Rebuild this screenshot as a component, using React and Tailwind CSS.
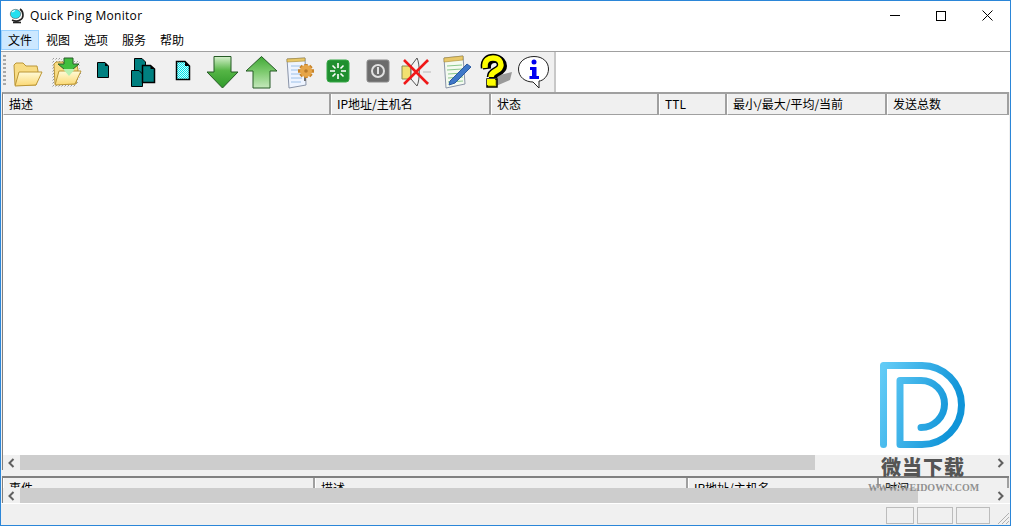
import React from "react";

const cjk = { fontFamily: '"Noto Sans CJK SC", "Noto Sans", sans-serif' };

const menus = ["文件", "视图", "选项", "服务", "帮助"];

const topColumns = [
  { label: "描述", width: "w-[328px]" },
  { label: "IP地址/主机名", width: "w-[160px]" },
  { label: "状态", width: "w-[168px]" },
  { label: "TTL", width: "w-[68px]" },
  { label: "最小/最大/平均/当前", width: "w-[160px]" },
  { label: "发送总数", width: "flex-1" },
];

const bottomColumns = [
  { label: "事件", width: "w-[312px]" },
  { label: "描述", width: "w-[373px]" },
  { label: "IP地址/主机名", width: "w-[191px]" },
  { label: "时间", width: "flex-1" },
];

function Svg({ children }) {
  return (
    <svg width="39" height="40" viewBox="0 0 39 40" className="block">
      {children}
    </svg>
  );
}

function FolderIcon() {
  return (
    <Svg>
      <defs>
        <linearGradient id="fold" x1="0" y1="0" x2="0" y2="1">
          <stop offset="0" stopColor="#fffbd8" />
          <stop offset="1" stopColor="#fbd873" />
        </linearGradient>
      </defs>
      <path d="M7 33 L6 13 L8 11 H15 L18 14 H29 L30 19 L28 33 Z" fill="#f8dc84" stroke="#bb9636" />
      <path d="M7 34 L11 20 H34 L28 33 Z" fill="url(#fold)" stroke="#bb9636" />
    </Svg>
  );
}

function OpenIcon() {
  return (
    <Svg>
      <defs>
        <pattern id="halo" width="3" height="3" patternUnits="userSpaceOnUse">
          <rect width="1" height="1" fill="#9a9a9a" />
          <rect x="2" y="1" width="1" height="1" fill="#c4c4c4" />
        </pattern>
        <linearGradient id="fold2" x1="0" y1="0" x2="0" y2="1">
          <stop offset="0" stopColor="#fffbd8" />
          <stop offset="1" stopColor="#fbd873" />
        </linearGradient>
      </defs>
      <path d="M5 5 H15 V9 H33 V20 L35 20 L29 35 H5 Z" fill="url(#halo)" />
      <path d="M8 32 L7 12 L9 10 H16 L19 13 H30 L31 18 L29 32 Z" fill="#f8dc84" stroke="#bb9636" />
      <path d="M8 33 L12 19 H34 L28 32 Z" fill="url(#fold2)" stroke="#bb9636" />
      <path d="M17 6 H26 V12 H32 L21.5 21 L11 12 H17 Z" fill="#3fbf3f" stroke="#2a5a2a" />
      <path d="M16 17 L22 24 L28 17 Z" fill="#b8f0b0" />
    </Svg>
  );
}

function DocIcon() {
  return (
    <Svg>
      <path d="M11.5 10.5 H19 L22.5 14 V25.5 H11.5 Z" fill="#008080" stroke="#000" />
      <path d="M19 10.5 V14 H22.5 Z" fill="#000" />
    </Svg>
  );
}

function DocsIcon() {
  const page = "M0.5 0.5 H8 L11.5 4 V16.5 H0.5 Z";
  return (
    <Svg>
      <path transform="translate(9 6)" d={page} fill="#008080" stroke="#000" />
      <path transform="translate(6 18)" d={page} fill="#008080" stroke="#000" />
      <path transform="translate(17 13)" d="M0.5 0.5 H8.5 L12.5 4 V17.5 H0.5 Z" fill="#008080" stroke="#000" strokeWidth="1.5" />
      <path d="M25.5 13.5 V17 H29.5 Z" fill="#000" />
    </Svg>
  );
}

function DocNewIcon() {
  return (
    <Svg>
      <defs>
        <pattern id="dither" width="2" height="2" patternUnits="userSpaceOnUse">
          <rect width="2" height="2" fill="#c8ffff" />
          <rect width="1" height="1" fill="#00e0e8" />
          <rect x="1" y="1" width="1" height="1" fill="#00e0e8" />
        </pattern>
      </defs>
      <path d="M12.5 9.5 H21 L25.5 14 V27.5 H12.5 Z" fill="url(#dither)" stroke="#000" strokeWidth="1.5" />
      <path d="M21 9.5 V14 H25.5 Z" fill="#000" />
    </Svg>
  );
}

function DownIcon() {
  return (
    <Svg>
      <defs>
        <linearGradient id="dn" x1="0" y1="0" x2="0" y2="1">
          <stop offset="0" stopColor="#d5f0cc" />
          <stop offset="0.45" stopColor="#55b545" />
          <stop offset="1" stopColor="#2f9a2a" />
        </linearGradient>
      </defs>
      <path d="M11 4.5 H28 V20 H35 L19.5 36 L4 20 H11 Z" fill="url(#dn)" stroke="#255a25" />
    </Svg>
  );
}

function UpIcon() {
  return (
    <Svg>
      <defs>
        <linearGradient id="up" x1="0" y1="0" x2="0" y2="1">
          <stop offset="0" stopColor="#3fa835" />
          <stop offset="0.5" stopColor="#7fcb70" />
          <stop offset="1" stopColor="#c5e8bc" />
        </linearGradient>
      </defs>
      <path d="M19.5 4.5 L35 19 H28 V36 H11 V19 H4 Z" fill="url(#up)" stroke="#255a25" />
    </Svg>
  );
}

function NotesIcon() {
  return (
    <Svg>
      <path d="M6 7 L24 6 L25 33 L8 36 Z" fill="#eef4ff" stroke="#8a94a8" />
      <path d="M6 7 L24 6 L24 9 L6 10 Z" fill="#e8c86a" stroke="#a88a30" strokeWidth="0.6" />
      <path d="M10 14 H21 M10 18 H20 M10 22 H19 M10 26 H21 M10 30 H20" stroke="#9cc0e8" />
      <path d="M24 22 V29" stroke="#707070" strokeWidth="2" />
      <path d="M25 12 V26 M17 19 H33 M19.5 14 L30.5 24 M30.5 14 L19.5 24" stroke="#c98428" strokeWidth="3.5" />
      <circle cx="25" cy="19" r="6" fill="#e6a548" />
      <circle cx="25" cy="19" r="1.8" fill="#b87a28" />
    </Svg>
  );
}

function GreenIcon() {
  return (
    <Svg>
      <rect x="7" y="8" width="22" height="22" rx="3" fill="#1f8f2f" stroke="#37a847" />
      <path
        d="M18 11 V16 M18 22 V27 M10 19 H15 M21 19 H26 M12.5 13.5 L15.5 16.5 M20.5 21.5 L23.5 24.5 M23.5 13.5 L20.5 16.5 M15.5 21.5 L12.5 24.5"
        stroke="#ffffff"
        strokeWidth="1.6"
      />
    </Svg>
  );
}

function PowerIcon() {
  return (
    <Svg>
      <rect x="8" y="8" width="22" height="22" rx="2" fill="#6c6c6c" stroke="#8a8a8a" />
      <circle cx="19" cy="19" r="6" fill="none" stroke="#e0e0e0" strokeWidth="2" />
      <path d="M19 15 V22" stroke="#e0e0e0" strokeWidth="2" />
    </Svg>
  );
}

function SpeakerIcon() {
  return (
    <Svg>
      <path d="M4 14 H13 V27 H4 Z" fill="#f2e070" stroke="#8a8a50" />
      <path d="M13 14 L19 6 C22 12 22 28 19 34 L13 27 Z" fill="#f4f4f4" stroke="#555" />
      <path d="M25 20 H33 M24 13 L31 9 M24 27 L31 31" stroke="#b8b8b8" />
      <path d="M6 8 L30 32 M30 8 L6 32" stroke="#f01818" strokeWidth="2.5" />
    </Svg>
  );
}

function PadIcon() {
  return (
    <Svg>
      <path d="M7 6 L26 4 L28 32 L9 36 Z" fill="#f4faf0" stroke="#8a94a8" />
      <path d="M7 6 L26 4 L26 8 L7 10 Z" fill="#e8c86a" stroke="#a88a30" strokeWidth="0.6" />
      <path d="M10 14 L25 13 M10 18 L25 17 M11 22 L26 21 M11 26 L26 25 M11 30 L26 29" stroke="#8cc88c" />
      <path d="M13 29 L30 12 L34 15 L18 31 L12 33 Z" fill="#3f78c8" stroke="#2a5aa0" />
    </Svg>
  );
}

function HelpIcon() {
  const curve = "M9 16 C8 8 13 6 17 6 C23 6 25 10 25 13 C25 20 15 18 15 25";
  return (
    <Svg>
      <path d="M20 24 L36 20 L34 28 L20 34 Z" fill="#9a9a9a" />
      <path transform="translate(2 1)" d={curve} fill="none" stroke="#000" strokeWidth="8" />
      <path d={curve} fill="none" stroke="#000" strokeWidth="8.5" />
      <path d="M11 27 H21 V35 H11 Z" fill="#c8c800" stroke="#000" strokeWidth="1.5" />
      <path d="M11 27 H19 V33 H11 Z" fill="#ffff00" />
      <path d={curve} fill="none" stroke="#ffff00" strokeWidth="5.5" />
    </Svg>
  );
}

function InfoIcon() {
  return (
    <Svg>
      <path
        d="M19 4.5 C28 4.5 33.5 10 33.5 17 C33.5 24 28 29 24 29 L24 36 L18 30 C10 30 3.5 25 3.5 17 C3.5 10 10 4.5 19 4.5 Z"
        fill="#ffffff"
        stroke="#222"
      />
      <circle cx="19" cy="10" r="2.5" fill="#0000f0" />
      <path d="M15 15 H21.5 V24 H24 V27 H14.5 V24 H17 V18 H15 Z" fill="#0000f0" />
    </Svg>
  );
}

const toolIcons = [
  FolderIcon,
  OpenIcon,
  DocIcon,
  DocsIcon,
  DocNewIcon,
  DownIcon,
  UpIcon,
  NotesIcon,
  GreenIcon,
  PowerIcon,
  SpeakerIcon,
  PadIcon,
  HelpIcon,
  InfoIcon,
];

function HeaderRow({ columns, height }) {
  return (
    <div className={`flex ${height} overflow-hidden bg-[#f0f0f0] text-[12px] leading-[20px] text-black`}>
      {columns.map((col) => (
        <div
          key={col.label}
          className={`${col.width} h-[21px] shrink-0 truncate border-r-2 border-r-[#a0a0a0] border-l border-l-white border-b border-b-[#a0a0a0] pl-[5px]`}
        >
          {col.label}
        </div>
      ))}
    </div>
  );
}

function Scrollbar({ thumb }) {
  return (
    <div className="flex h-[15px] items-center bg-[#f0f0f0]">
      <div className="flex h-[15px] w-[17px] items-center justify-center">
        <svg width="7" height="10" viewBox="0 0 7 10">
          <path d="M5.5 1 L1.5 5 L5.5 9" fill="none" stroke="#606060" strokeWidth="2" />
        </svg>
      </div>
      <div className="h-[15px] flex-1">
        <div className={`h-[15px] bg-[#cdcdcd] ${thumb}`} />
      </div>
      <div className="flex h-[15px] w-[17px] items-center justify-center">
        <svg width="7" height="10" viewBox="0 0 7 10">
          <path d="M1.5 1 L5.5 5 L1.5 9" fill="none" stroke="#606060" strokeWidth="2" />
        </svg>
      </div>
    </div>
  );
}

function Watermark() {
  return (
    <div className="pointer-events-none absolute left-[859px] top-[359px] w-[130px]">
      <svg width="110" height="92" viewBox="860 360 110 92" className="block">
        <defs>
          <linearGradient id="logo" x1="0" y1="0" x2="1" y2="0.3">
            <stop offset="0" stopColor="#62cbf6" />
            <stop offset="1" stopColor="#1094d8" />
          </linearGradient>
        </defs>
        <path
          d="M883.5 444.5 V365.5 H922 A39.5 39.5 0 0 1 922 444.5 H900 V380.5 H921 A23.5 23.5 0 0 1 921 427.5"
          fill="none"
          stroke="url(#logo)"
          strokeWidth="7"
          strokeLinecap="round"
          strokeLinejoin="round"
        />
      </svg>
      <div className="absolute left-[21px] top-[94px] whitespace-nowrap text-[20px] font-black leading-[26px] tracking-[1px] text-[#555555]" style={cjk}>
        微当下载
      </div>
      <div className="absolute left-[8px] top-[121px] whitespace-nowrap text-[10px] font-bold leading-[13px] text-[#777777]/80" style={{ fontFamily: '"Liberation Serif", serif' }}>
        WWW.WEIDOWN.COM
      </div>
    </div>
  );
}

export default function App() {
  return (
    <div className="relative flex h-[526px] w-[1011px] flex-col overflow-hidden border border-[#2b86d8] bg-[#f0f0f0]" style={cjk}>
      {/* title bar */}
      <div className="flex h-[29px] shrink-0 items-center bg-white">
        <svg width="17" height="17" viewBox="0 0 17 17" className="ml-[7px]">
          <path d="M12 2 C16 5 16 11 12 13 C9 15 6 14 4 13" fill="none" stroke="#222" strokeWidth="1.6" />
          <path d="M5 15.5 H13" stroke="#222" strokeWidth="1.6" />
          <ellipse cx="7.5" cy="7" rx="5.2" ry="4.6" fill="#22e0f0" stroke="#555" strokeWidth="0.6" />
          <path d="M4 5 L7 3.5" stroke="#e8ffff" strokeWidth="1.2" />
        </svg>
        <span className="ml-[5px] text-[12px] tracking-[0.3px] text-black" style={{ fontFamily: '"Open Sans", sans-serif' }}>
          Quick Ping Monitor
        </span>
        <div className="ml-auto flex h-[29px]">
          <div className="flex w-[46px] items-center justify-center">
            <div className="h-px w-[10px] bg-black" />
          </div>
          <div className="flex w-[46px] items-center justify-center">
            <div className="h-[10px] w-[10px] border border-black" />
          </div>
          <div className="flex w-[46px] items-center justify-center">
            <svg width="11" height="11" viewBox="0 0 11 11">
              <path d="M0.5 0.5 L10.5 10.5 M10.5 0.5 L0.5 10.5" stroke="#000" />
            </svg>
          </div>
        </div>
      </div>

      {/* menu bar */}
      <div className="flex h-[21px] shrink-0 items-start bg-white text-[12px] text-black">
        {menus.map((menu, i) => (
          <div
            key={menu}
            className={
              i === 0
                ? "flex h-[20px] w-[38px] items-center justify-center border border-[#99d1ff] bg-[#cce8ff]"
                : "flex h-[20px] w-[38px] items-center justify-center"
            }
          >
            {menu}
          </div>
        ))}
      </div>

      {/* toolbar */}
      <div className="flex h-[41px] shrink-0 border-t border-t-[#a0a0a0] bg-white">
        <div className="flex w-[555px] border-r-2 border-r-[#c8c8c8] bg-[#f0f0f0]">
          <div className="ml-[2px] mt-[3px] h-[32px] w-[3px] shrink-0 bg-[repeating-linear-gradient(to_bottom,#a8a8a8_0,#a8a8a8_2px,transparent_2px,transparent_4px)]" />
          <div className="ml-[2px] flex shrink-0">
            {toolIcons.map((Icon, i) => (
              <div key={i} className="w-[39px] shrink-0">
                <Icon />
              </div>
            ))}
          </div>
        </div>
      </div>

      {/* ping list */}
      <div className="mx-px flex h-[378px] shrink-0 flex-col border-l border-t-2 border-l-[#808080] border-t-[#a0a0a0]">
        <HeaderRow columns={topColumns} height="h-[21px]" />
        <div className="flex-1 bg-white" />
        <Scrollbar thumb="w-[795px]" />
      </div>

      {/* event log */}
      <div className="mx-px mt-[6px] flex h-[27px] shrink-0 flex-col border-l border-t-2 border-l-[#808080] border-t-[#808080]">
        <HeaderRow columns={bottomColumns} height="h-[10px]" />
        <Scrollbar thumb="w-[898px]" />
      </div>

      {/* status bar */}
      <div className="relative flex flex-1 items-end justify-end border-t border-t-white pb-[1px]">
        <div className="h-[17px] w-[28px] border border-[#bcbcbc]" />
        <div className="ml-[3px] h-[17px] w-[36px] border border-[#bcbcbc]" />
        <div className="ml-[3px] h-[17px] w-[34px] border border-[#bcbcbc]" />
        <svg width="20" height="14" viewBox="0 0 20 14" className="block">
          <path d="M19 3 L8 14 M19 7 L12 14 M19 11 L16 14" stroke="#b0b0b0" />
        </svg>
      </div>

      <Watermark />
    </div>
  );
}
